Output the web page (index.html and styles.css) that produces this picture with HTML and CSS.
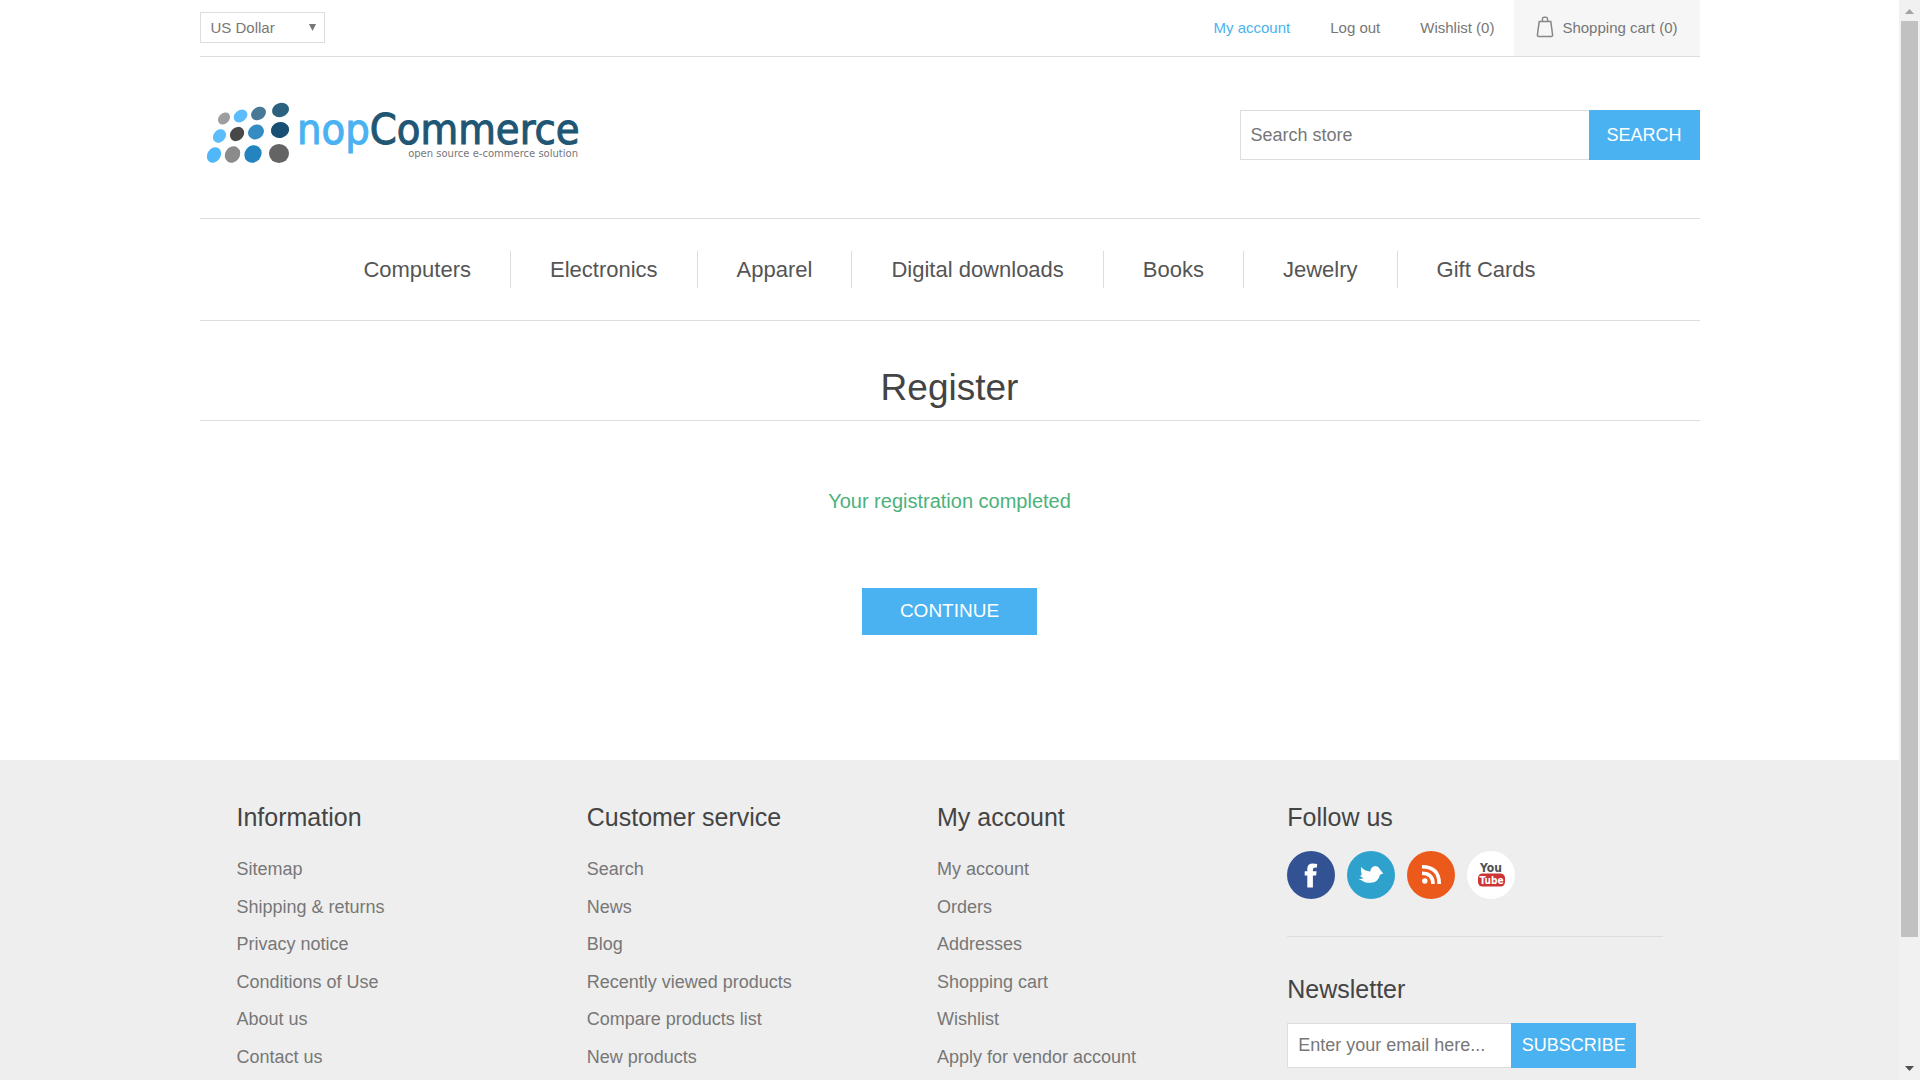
FILE: index.html
```html
<!DOCTYPE html>
<html lang="en">
<head>
<meta charset="utf-8">
<title>nopCommerce - Register</title>
<link rel="stylesheet" href="styles.css">
</head>
<body>
<div class="page">
  <header class="container">
    <div class="topbar">
      <select class="currency" aria-label="Currency"><option>US Dollar</option></select>
      <nav class="account" aria-label="Account">
        <a class="active" href="#">My account</a>
        <a href="#">Log out</a>
        <a href="#">Wishlist (0)</a>
        <a class="cart" href="#">
          <svg width="18" height="24" viewBox="0 0 18 24" fill="none" stroke="#888" stroke-width="1.5" aria-hidden="true"><path d="M3.2 5.6h11.6l1.8 13.2q.1 1.6-1.4 1.6H2.8q-1.5 0-1.4-1.6z"/><path d="M6.4 5.4V3q0-1.8 1.6-1.8h2q1.6 0 1.6 1.8v2.400"/></svg>
          <span>Shopping cart (0)</span>
        </a>
      </nav>
    </div>
    <div class="masthead">
      <a class="logo" href="#" aria-label="nopCommerce">
        <svg width="386" height="72" viewBox="0 0 386 72">
          <ellipse cx="24" cy="20.5" rx="6.8" ry="5.2" transform="rotate(-45 24 20.5)" fill="#9c9ea0"/>
          <ellipse cx="40.5" cy="18" rx="7.4" ry="5.8" transform="rotate(-38 40.5 18)" fill="#5bbdfb"/>
          <ellipse cx="58.5" cy="15.5" rx="7.8" ry="6.3" transform="rotate(-32 58.5 15.5)" fill="#477996"/>
          <ellipse cx="80.5" cy="12" rx="8.7" ry="7" transform="rotate(-20 80.5 12)" fill="#2c617f"/>
          <ellipse cx="19.5" cy="38" rx="7.3" ry="6" transform="rotate(-50 19.5 38)" fill="#5bbdfb"/>
          <ellipse cx="37" cy="36" rx="7.7" ry="6.5" transform="rotate(-45 37 36)" fill="#484848"/>
          <ellipse cx="56" cy="34" rx="8.2" ry="7.2" transform="rotate(-32 56 34)" fill="#358cc3"/>
          <ellipse cx="80" cy="32" rx="9.2" ry="7.9" transform="rotate(-15 80 32)" fill="#194f72"/>
          <ellipse cx="14" cy="57" rx="8.2" ry="6.6" transform="rotate(-55 14 57)" fill="#50b7f8"/>
          <ellipse cx="32.5" cy="56.5" rx="8.6" ry="7.3" transform="rotate(-55 32.5 56.5)" fill="#8b8b8b"/>
          <ellipse cx="53" cy="56" rx="9.2" ry="8.2" transform="rotate(-50 53 56)" fill="#2484bf"/>
          <ellipse cx="79" cy="55.5" rx="10" ry="9.5" fill="#646464"/>
          <text class="logo-name" x="97" y="46"><tspan fill="#4ab2f1" stroke="#4ab2f1">nop</tspan><tspan fill="#1f5674" stroke="#1f5674">Commerce</tspan></text>
          <text class="logo-tag" x="378" y="59" text-anchor="end">open source e-commerce solution</text>
        </svg>
      </a>
      <form class="field search">
        <input type="text" placeholder="Search store" aria-label="Search store">
        <button type="button">SEARCH</button>
      </form>
    </div>
    <nav class="menu" aria-label="Categories">
      <a href="#">Computers</a>
      <a href="#">Electronics</a>
      <a href="#">Apparel</a>
      <a href="#">Digital downloads</a>
      <a href="#">Books</a>
      <a href="#">Jewelry</a>
      <a href="#">Gift Cards</a>
    </nav>
  </header>
  <main class="container content">
    <h1>Register</h1>
    <p class="result">Your registration completed</p>
    <button class="continue" type="button">CONTINUE</button>
  </main>
  <footer class="footer">
    <div class="container footer-grid">
      <section>
        <h2>Information</h2>
        <ul class="links">
          <li><a href="#">Sitemap</a></li>
          <li><a href="#">Shipping &amp; returns</a></li>
          <li><a href="#">Privacy notice</a></li>
          <li><a href="#">Conditions of Use</a></li>
          <li><a href="#">About us</a></li>
          <li><a href="#">Contact us</a></li>
        </ul>
      </section>
      <section>
        <h2>Customer service</h2>
        <ul class="links">
          <li><a href="#">Search</a></li>
          <li><a href="#">News</a></li>
          <li><a href="#">Blog</a></li>
          <li><a href="#">Recently viewed products</a></li>
          <li><a href="#">Compare products list</a></li>
          <li><a href="#">New products</a></li>
        </ul>
      </section>
      <section>
        <h2>My account</h2>
        <ul class="links">
          <li><a href="#">My account</a></li>
          <li><a href="#">Orders</a></li>
          <li><a href="#">Addresses</a></li>
          <li><a href="#">Shopping cart</a></li>
          <li><a href="#">Wishlist</a></li>
          <li><a href="#">Apply for vendor account</a></li>
        </ul>
      </section>
      <section>
        <h2>Follow us</h2>
        <div class="social">
          <a href="#" aria-label="Facebook">
            <svg width="48" height="48" viewBox="0 0 48 48"><circle cx="24" cy="24" r="24" fill="#335293"/><path fill="#fff" d="M20.3 36.5V24.6h-2.6v-4.400h2.600v-2.400q0-5.300 5.600-5.300 2.400 0 4.300.4l-.5 3.800q-3.800-.7-3.800 1.700v1.800h3.700l-.5 4.400h-3.200v11.900z"/></svg>
          </a>
          <a href="#" aria-label="Twitter">
            <svg width="48" height="48" viewBox="0 0 48 48"><circle cx="24" cy="24" r="24" fill="#2ea2cc"/><path fill="#fff" d="M11.500 27.800q3 .5 5-.8-2.800-.8-3.700-2.700 1.200.2 2-.1-1.200-4-.8-8.200 3.500 4.200 9.200 4.500.8-5.200 5.500-5.500 3 .2 4.200 3.200l3.300 4.300-3.200 1.200q-1.800 7.800-9.500 8-6 .2-8.500-2.300-2.500-.2-3.500-1.600z"/></svg>
          </a>
          <a href="#" aria-label="RSS">
            <svg width="48" height="48" viewBox="0 0 48 48"><circle cx="24" cy="24" r="24" fill="#eb5a1b"/><circle cx="17.8" cy="30" r="2.7" fill="#fff"/><path fill="none" stroke="#fff" stroke-width="3.6" d="M15 22.200q11 0 11 10.800M15 15.800q17.200 0 17.200 17.200"/></svg>
          </a>
          <a href="#" aria-label="YouTube">
            <svg width="48" height="48" viewBox="0 0 48 48"><circle cx="24" cy="24" r="24" fill="#fff"/><rect x="11" y="22.5" width="27" height="13" rx="4.5" fill="#cc3436"/><text class="yt" x="24" y="21" fill="#505050" text-anchor="middle">You</text><text class="yt yt-low" x="24.5" y="33" fill="#fff" text-anchor="middle">Tube</text></svg>
          </a>
        </div>
        <div class="newsletter">
          <h2>Newsletter</h2>
          <form class="field">
            <input type="email" placeholder="Enter your email here..." aria-label="Email">
            <button type="button">SUBSCRIBE</button>
          </form>
        </div>
      </section>
    </div>
  </footer>
</div>
<div class="scrollbar" aria-hidden="true">
  <svg width="9" height="5" viewBox="0 0 9 5"><path fill="#a3a3a3" d="M0 5 4.500 0 9 5z"/></svg>
  <div class="track"><div class="thumb"></div></div>
  <svg width="9" height="5" viewBox="0 0 9 5"><path fill="#505050" d="M0 0h9L4.500 5z"/></svg>
</div>
</body>
</html>
```
FILE: styles.css
```css
* { box-sizing: border-box; }

body {
  margin: 0;
  height: 100vh;
  overflow: hidden;
  display: grid;
  grid-template-columns: 1fr 21px;
  background: #fff;
  color: #777;
  font: 18px/24px "Liberation Sans", Arial, sans-serif;
}

a { color: inherit; text-decoration: none; }
h1, h2, p, ul { margin: 0; padding: 0; font-weight: 400; }
input, button, select { font: inherit; border-radius: 0; }
svg { display: block; }

.page { height: 100vh; overflow: hidden; display: flex; flex-direction: column; }
.container { width: 100%; max-width: 1500px; margin: 0 auto; }

/* Top bar */
.topbar {
  display: flex;
  justify-content: space-between;
  align-items: flex-start;
  height: 57px;
  border-bottom: 1px solid #ddd;
  font-size: 15px;
}
.currency {
  appearance: none;
  width: 125px;
  height: 31px;
  margin-top: 12px;
  padding: 0 10px;
  border: 1px solid #ddd;
  color: #777;
  background: url("data:image/svg+xml,%3Csvg xmlns='http://www.w3.org/2000/svg' width='7' height='7'%3E%3Cpath fill='%23777' d='M0 0h7L3.5 7z'/%3E%3C/svg%3E") no-repeat right 8px center #fff;
}
.account { display: flex; align-self: stretch; align-items: center; gap: 40px; }
.account .active { color: #4ab2f1; }
.account .cart {
  display: flex;
  align-items: center;
  align-self: stretch;
  gap: 8px;
  margin-left: -20px;
  padding: 0 22px;
  background: #f6f6f6;
}

/* Logo and search */
.masthead {
  display: flex;
  justify-content: space-between;
  align-items: flex-start;
  padding: 41px 0 48px;
}
.logo-name { font: 43px "DejaVu Sans Condensed", "DejaVu Sans", sans-serif; stroke-width: 1px; }
.logo-tag { font: 10px "DejaVu Sans", sans-serif; fill: #777; }

.field { display: flex; }
.field input {
  min-width: 0;
  width: 224px;
  height: 45px;
  padding: 0 10px;
  border: 1px solid #ddd;
  border-right: 0;
  background: #fff;
}
.field input::placeholder { color: #777; opacity: 1; }
.field button, .continue { border: 0; padding: 0 0 1px; background: #4ab2f1; color: #fff; }
.field button { width: 125px; }
.search { padding-top: 12px; }
.search input { width: 349px; height: 50px; }
.search button { width: 111px; }

/* Category menu */
.menu {
  display: flex;
  justify-content: center;
  padding: 32px 0;
  border-top: 1px solid #ddd;
  border-bottom: 1px solid #ddd;
  color: #555;
  font-size: 22px;
  line-height: 37px;
}
.menu a { padding: 0 39px; }
.menu a + a { border-left: 1px solid #ddd; }

/* Registration result */
.content { text-align: center; padding: 46px 0 125px; }
.content h1 {
  padding-bottom: 11px;
  border-bottom: 1px solid #ddd;
  color: #444;
  font-size: 37px;
  line-height: 42px;
}
.result { margin: 68px 0 75px; color: #4cb17b; font-size: 20px; }
.continue { display: block; width: 175px; height: 47px; margin: 0 auto; font-size: 19px; }

/* Footer */
.footer { flex: 1 0 auto; background: #eee; }
.footer-grid {
  display: grid;
  grid-template-columns: 350fr 350fr 350fr 375fr;
  padding: 42px 37px 11px;
}
.footer h2 { margin-bottom: 19px; color: #444; font-size: 25px; line-height: 30px; }
.links {
  display: flex;
  flex-direction: column;
  justify-content: space-between;
  height: 218px;
  padding-top: 6px;
  list-style: none;
}
.social { display: flex; gap: 12px; padding-bottom: 37px; border-bottom: 1px solid #ddd; }
.newsletter { padding-top: 37px; }
.yt { font: bold 12px "DejaVu Sans Condensed", "DejaVu Sans", sans-serif; }
.yt-low { font-size: 10px; }

/* Window scrollbar */
.scrollbar {
  display: flex;
  flex-direction: column;
  align-items: center;
  gap: 7px;
  height: 100vh;
  padding: 9px 0;
  background: #f1f1f1;
}
.track { flex: 1; padding-bottom: 122px; }
.thumb { width: 17px; height: 100%; background: #c1c1c1; }
```
